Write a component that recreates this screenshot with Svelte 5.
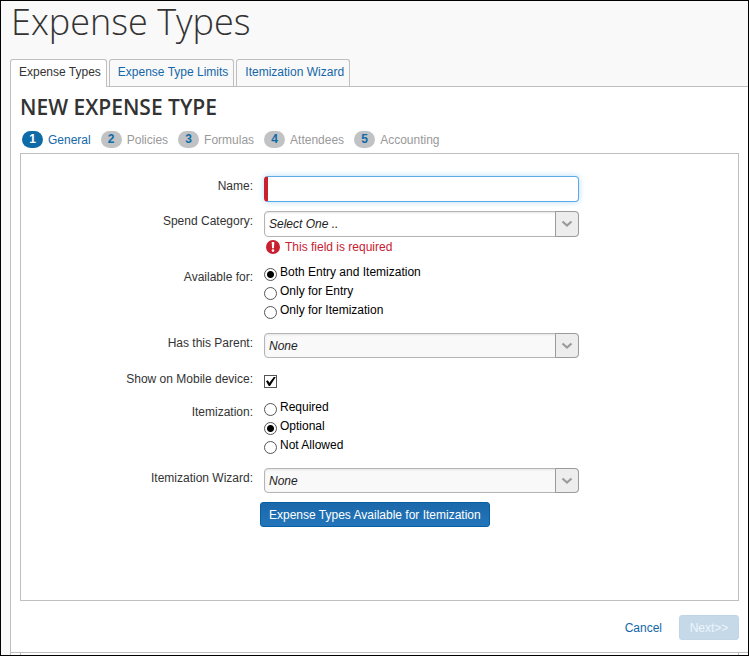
<script>
  const tabs = ['Expense Types', 'Expense Type Limits', 'Itemization Wizard'];
  const steps = ['General', 'Policies', 'Formulas', 'Attendees', 'Accounting'];
  const availability = ['Both Entry and Itemization', 'Only for Entry', 'Only for Itemization'];
  const itemizations = ['Required', 'Optional', 'Not Allowed'];

  let name = $state('');
  let category = $state('Select One ..');
  let parent = $state('None');
  let wizard = $state('None');
  let available = $state('Both Entry and Itemization');
  let itemization = $state('Optional');
  let mobile = $state(true);
</script>

{#snippet arrow()}
  <span class="arrow" aria-hidden="true">
    <svg width="12" height="8" viewBox="0 0 12 8"><path d="M1.5 1.5 L6 5.5 L10.5 1.5" fill="none" stroke="#999b9e" stroke-width="2.2" /></svg>
  </span>
{/snippet}

<div class="page">
  <header>
    <h1>Expense Types</h1>
    <nav class="tabs" aria-label="Sections">
      {#each tabs as tab, i}
        <a href="#tab{i}" class:active={i === 0}>{tab}</a>
      {/each}
    </nav>
  </header>

  <main>
    <h2>New Expense Type</h2>
    <ol class="steps">
      {#each steps as step, i}
        <li class:current={i === 0}><span class="num">{i + 1}</span>{step}</li>
      {/each}
    </ol>

    <form>
      <div class="panel">
        <div class="row">
          <label class="caption" for="name">Name:</label>
          <input id="name" class="name" type="text" bind:value={name} />
        </div>

        <div class="row">
          <label class="caption" for="category">Spend Category:</label>
          <div>
            <div class="combo">
              <select id="category" bind:value={category}><option>Select One ..</option></select>
              {@render arrow()}
            </div>
            <p class="error">
              <svg width="14" height="14" viewBox="0 0 14 14" aria-hidden="true">
                <circle cx="7" cy="7" r="7" fill="#c8202f" />
                <path d="M5.7 2 H8.3 L7.9 8.3 H6.1 Z" fill="#fff" />
                <circle cx="7" cy="10.6" r="1.3" fill="#fff" />
              </svg>
              This field is required
            </p>
          </div>
        </div>

        <fieldset class="row group" aria-labelledby="available-caption">
          <span class="caption" id="available-caption">Available for:</span>
          <div>
            {#each availability as option}
              <label class="choice"><input type="radio" name="available" value={option} bind:group={available} />{option}</label>
            {/each}
          </div>
        </fieldset>

        <div class="row">
          <label class="caption" for="parent">Has this Parent:</label>
          <div class="combo muted">
            <select id="parent" bind:value={parent}><option>None</option></select>
            {@render arrow()}
          </div>
        </div>

        <div class="row mobile">
          <label class="caption" for="mobile">Show on Mobile device:</label>
          <span class="check">
            <input id="mobile" type="checkbox" bind:checked={mobile} />
            {#if mobile}
              <svg width="13" height="13" viewBox="0 0 13 13" aria-hidden="true"><path d="M2 6.2 L3.8 5.2 L5.4 7.8 L9.8 2 L11.8 2 L6 11 L4.8 11 Z" fill="#000" /></svg>
            {/if}
          </span>
        </div>

        <fieldset class="row group" aria-labelledby="itemization-caption">
          <span class="caption" id="itemization-caption">Itemization:</span>
          <div>
            {#each itemizations as option}
              <label class="choice"><input type="radio" name="itemization" value={option} bind:group={itemization} />{option}</label>
            {/each}
          </div>
        </fieldset>

        <div class="row">
          <label class="caption" for="wizard">Itemization Wizard:</label>
          <div class="combo muted">
            <select id="wizard" bind:value={wizard}><option>None</option></select>
            {@render arrow()}
          </div>
        </div>

        <button type="button" class="primary">Expense Types Available for Itemization</button>
      </div>

      <div class="actions">
        <a href="#cancel">Cancel</a>
        <button type="submit" class="next" disabled>Next&gt;&gt;</button>
      </div>
    </form>
  </main>
  <div class="below"><div></div></div>
</div>

<style>
  :global(body) { margin: 0; }
  .page, .page * { box-sizing: border-box; }
  .page {
    min-height: 100vh;
    display: flex;
    flex-direction: column;
    border: 1px solid #000;
    padding-left: 9px;
    background: #f9f9f9;
    color: #333;
    font: 12px/16px "Liberation Sans", Arial, sans-serif;
  }
  h1 {
    margin: 0;
    font: 300 36px/42px "Open Sans", sans-serif;
    padding-left: 1px;
  }
  a { color: #1467a8; text-decoration: none; }
  .tabs { display: flex; gap: 2px; padding-top: 16px; }
  .tabs a {
    height: 27px;
    padding: 4px 5px 4px 8px;
    border: 1px solid #bfbfbf;
    border-bottom: 0;
    border-radius: 3px 3px 0 0;
  }
  .tabs a.active {
    height: 28px;
    margin-bottom: -1px;
    position: relative;
    background: #fff;
    color: #333;
  }
  main {
    background: #fff;
    border-top: 1px solid #bfbfbf;
    border-left: 1px solid #bfbfbf;
    padding: 6px 9px 0;
  }
  h2 {
    margin: 0;
    font: 600 21px/28px "Open Sans", sans-serif;
    text-transform: uppercase;
  }
  .steps {
    display: flex;
    gap: 10px;
    list-style: none;
    margin: 0;
    padding: 10px 2px 5px;
    color: #999;
  }
  .steps li { display: flex; align-items: center; gap: 5px; }
  .steps .current { color: #1467a8; }
  .num {
    width: 21px;
    height: 17px;
    border-radius: 9px;
    background: #c0c2c4;
    color: #0f6ba8;
    font-weight: bold;
    line-height: 17px;
    text-align: center;
  }
  .current .num { background: #0f6ba8; color: #fff; }
  .panel {
    border: 1px solid #bfbfbf;
    padding: 22px 0 73px;
    display: flex;
    flex-direction: column;
    gap: 9px;
  }
  .row {
    display: grid;
    grid-template-columns: 232px 315px;
    column-gap: 11px;
    align-items: start;
    margin: 0;
    padding: 0;
    border: 0;
  }
  .caption { text-align: right; padding-top: 2px; }
  .group { padding-bottom: 4px; }
  .group .caption { padding-top: 6px; }
  .name {
    width: 100%;
    height: 26px;
    border: 1px solid #5aaae6;
    border-left: 4px solid #c8202f;
    border-radius: 4px;
    outline: none;
    background: #fff;
    box-shadow: 0 0 6px #b5dcf7;
    font: inherit;
  }
  .combo { display: grid; grid-template-columns: 1fr 24px; }
  .combo select, .arrow { grid-row: 1; height: 26px; }
  .combo select {
    grid-column: 1 / 3;
    appearance: none;
    width: 100%;
    border: 1px solid #b5b5b5;
    border-radius: 4px;
    padding: 0 28px 0 4px;
    background: #fff;
    box-shadow: inset 0 1px 2px #e4e4e4;
    color: #222;
    font: italic 12px/16px "Liberation Sans", Arial, sans-serif;
  }
  .muted select { background: #f9f9f9; }
  .muted select, .muted .arrow { height: 25px; }
  .arrow {
    grid-column: 2;
    z-index: 1;
    pointer-events: none;
    display: flex;
    align-items: center;
    justify-content: center;
    border: 1px solid #999b9e;
    border-radius: 0 4px 4px 0;
    background: #ededed;
  }
  .error {
    display: flex;
    align-items: center;
    gap: 5px;
    height: 17px;
    margin: 0;
    padding: 2px 0 0 2px;
    color: #c8202f;
  }
  .choice {
    display: flex;
    gap: 3px;
    height: 19px;
    line-height: 18px;
    color: #000;
  }
  .choice input, .check input {
    appearance: none;
    width: 13px;
    height: 13px;
    margin: 0;
    border: 1px solid #555;
    background: #fff;
  }
  .choice input { margin-top: 5px; border-radius: 50%; }
  .choice input:checked { background: radial-gradient(circle, #000 3px, #fff 4px); }
  .mobile { padding: 2px 0 1px; }
  .check { display: grid; width: 13px; padding-top: 6px; }
  .check input, .check svg { grid-area: 1 / 1; }
  .check svg { z-index: 1; pointer-events: none; }
  button {
    height: 25px;
    border-radius: 3px;
    border: 1px solid #075fa3;
    font: inherit;
    color: #fff;
  }
  .primary {
    align-self: flex-start;
    margin-left: 239px;
    padding: 0 8px;
    background: linear-gradient(#1b69aa, #2374ba);
  }
  .actions {
    display: flex;
    align-items: center;
    justify-content: flex-end;
    gap: 17px;
    padding: 14px 0 12px;
  }
  .next {
    width: 60px;
    padding: 0;
    background: #c6d9e9;
    border-color: #bfd5e8;
    color: #edf5fb;
  }
  .below {
    flex: 1;
    padding: 0 9px;
    background: #fff;
    border-top: 1px solid #bfbfbf;
    border-left: 1px solid #bfbfbf;
  }
  .below div {
    height: 2px;
    border: solid #bfbfbf;
    border-width: 0 1px;
  }
</style>
